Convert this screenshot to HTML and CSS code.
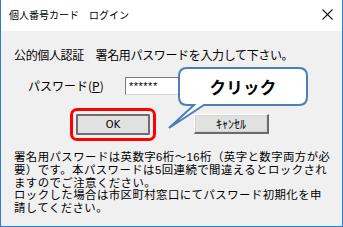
FILE: index.html
```html
<!DOCTYPE html>
<html lang="ja">
<head>
<meta charset="utf-8">
<link rel="stylesheet" href="styles.css">
</head>
<body>
<div class="window">
  <div class="titlebar">
    <span class="title">個人番号カード　ログイン</span>
    <svg class="close" width="11" height="11" viewBox="0 0 11 11"><path d="M0.5 0.5 L10.5 10.5 M10.5 0.5 L0.5 10.5" stroke="#1a1a1a" stroke-width="1.1" fill="none"/></svg>
  </div>
  <div class="content">
    <div class="intro">公的個人認証　署名用パスワードを入力して下さい。</div>
    <div class="pw-row">
      <span class="pw-label">パスワード(<u>P</u>)</span>
      <span class="pw-input">******</span>
    </div>
    <div class="btn-row">
      <span class="btn btn-ok">OK</span>
      <span class="btn btn-cancel">ｷｬﾝｾﾙ</span>
    </div>
    <div class="notes">
      <div>署名用パスワードは英数字6桁～16桁（英字と数字両方が必</div>
      <div>要）です。本パスワードは5回連続で間違えるとロックされ</div>
      <div>ますのでご注意ください。</div>
      <div>ロックした場合は市区町村窓口にてパスワード初期化を申</div>
      <div>請してください。</div>
    </div>
  </div>
  <div class="callout">
    <svg width="150" height="75" viewBox="0 0 150 75"><path d="M26 8 H138 Q146 8 146 16 V37 Q146 45 138 45 H43 L8 68 L33 45 H26 Q18 45 18 37 V16 Q18 8 26 8 Z" fill="#fff" stroke="#4a7ebb" stroke-width="2" stroke-linejoin="miter"/></svg>
    <span class="callout-text">クリック</span>
  </div>
</div>
</body>
</html>
```
FILE: styles.css
```css
html, body {
  margin: 0;
  padding: 0;
  width: 343px;
  height: 227px;
  overflow: hidden;
  background: #fff;
}
.window {
  position: relative;
  width: 341px;
  height: 226px;
  border: 1px solid #2b7cd3;
  border-top: none;
  display: flex;
  flex-direction: column;
  font-family: "Noto Sans CJK JP", "Noto Sans", sans-serif;
  color: #000;
}
.titlebar {
  height: 31px;
  background: #fff;
  display: flex;
  align-items: center;
  justify-content: space-between;
  padding: 0 9px 0 8px;
  box-sizing: border-box;
}
.title {
  font-size: 10px;
  line-height: 12px;
  color: #000;
  margin-top: -2px;
}
.close {
  margin-top: -2px;
}
.content {
  flex: 1;
  background: #f0f0f0;
  padding: 17px 0 0 13px;
  font-size: 12px;
}
.intro {
  line-height: 14px;
  white-space: nowrap;
  letter-spacing: -0.35px;
}
.pw-row {
  display: flex;
  align-items: center;
  margin-top: 15px;
  height: 18px;
}
.pw-label {
  width: 111px;
  padding-left: 14px;
  box-sizing: border-box;
  font-size: 12px;
  line-height: 14px;
  white-space: nowrap;
}
.pw-label u {
  text-decoration-thickness: 1px;
  text-underline-offset: 1px;
}
.pw-input {
  width: 120px;
  height: 18px;
  box-sizing: border-box;
  background: #fff;
  border: 1px solid #7a7a7a;
  border-right-color: #d8d8d8;
  border-bottom-color: #d8d8d8;
  font-family: "Liberation Sans", sans-serif;
  font-size: 11px;
  line-height: 16px;
  padding-left: 3px;
  letter-spacing: 0.5px;
}
.btn-row {
  display: flex;
  align-items: flex-start;
  margin-top: 19px;
  height: 21px;
}
.btn {
  display: flex;
  align-items: center;
  justify-content: center;
  box-sizing: border-box;
  background: #e1e1e1;
  font-size: 11px;
  line-height: 12px;
}
.btn-ok {
  margin-left: 62px;
  width: 74px;
  height: 21px;
  border: 2px solid #6e6e6e;
  outline: 3px solid #ff0000;
  outline-offset: 3px;
  border-radius: 1px;
  font-family: "DejaVu Sans Condensed", "DejaVu Sans", sans-serif;
}
.btn-cancel {
  margin-left: 44px;
  width: 75px;
  height: 20px;
  font-size: 12px;
  border: 1px solid #adadad;
  border-right: 2px solid #6b6b6b;
  border-bottom: 2px solid #6b6b6b;
  border-top-color: #ffffff;
  border-left-color: #ffffff;
  box-shadow: inset 0 0 0 1px #d5d5d5;
}
.notes {
  margin-top: 16px;
  line-height: 12.75px;
  font-family: "Liberation Sans", "Noto Sans CJK JP", sans-serif;
  font-size: 11.4px;
  white-space: nowrap;
  letter-spacing: 0.45px;
}
.callout {
  position: absolute;
  left: 160px;
  top: 60px;
  width: 150px;
  height: 75px;
}
.callout svg {
  display: block;
}
.callout-text {
  position: absolute;
  left: 18px;
  top: 8px;
  width: 128px;
  height: 37px;
  display: flex;
  align-items: center;
  justify-content: center;
  font-size: 16.5px;
  font-weight: bold;
  letter-spacing: 0.3px;
}
```
